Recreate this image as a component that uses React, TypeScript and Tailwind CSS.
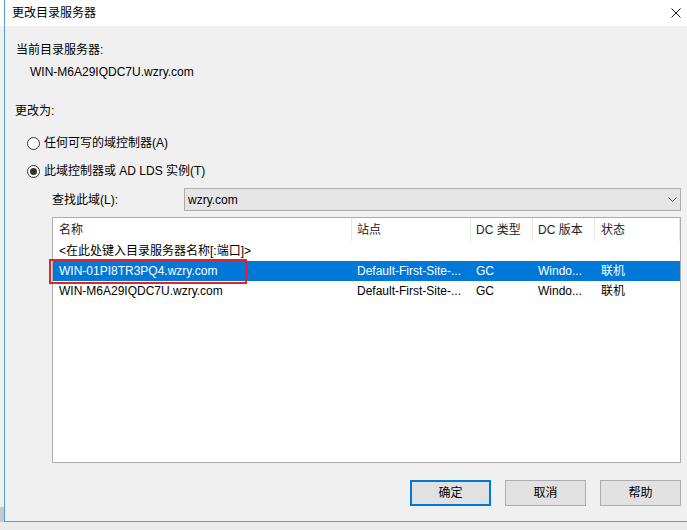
import * as React from "react";

const cols = [
  { key: "name", label: "名称", cls: "w-[299px] pl-[6px]" },
  { key: "site", label: "站点", cls: "w-[119px] pl-[5px]" },
  { key: "type", label: "DC 类型", cls: "w-[62px] pl-[5px]" },
  { key: "ver", label: "DC 版本", cls: "w-[62px] pl-[5px]" },
  { key: "state", label: "状态", cls: "flex-1 pl-[6px]" },
];

const servers = [
  { name: "WIN-01PI8TR3PQ4.wzry.com", site: "Default-First-Site-...", type: "GC", ver: "Windo...", state: "联机", selected: true },
  { name: "WIN-M6A29IQDC7U.wzry.com", site: "Default-First-Site-...", type: "GC", ver: "Windo...", state: "联机", selected: false },
];

function Radio({ checked, label }: { checked?: boolean; label: string }) {
  return (
    <div className="flex items-center h-[16px] ml-[22px] gap-[4px]">
      <span className="w-[13px] h-[13px] rounded-full border border-[#333] bg-white flex items-center justify-center">
        {checked && <span className="w-[7px] h-[7px] rounded-full bg-[#333]" />}
      </span>
      <span className="leading-[16px]">{label}</span>
    </div>
  );
}

function Button({ label, isDefault }: { label: string; isDefault?: boolean }) {
  return (
    <div
      className={
        isDefault
          ? "w-[81px] h-[26px] flex items-center justify-center bg-[#e1e1e1] border-2 border-[#0078d7]"
          : "w-[81px] h-[26px] flex items-center justify-center bg-[#e1e1e1] border border-[#adadad]"
      }
    >
      {label}
    </div>
  );
}

export default function App() {
  return (
    <div className="w-[687px] h-[530px] overflow-hidden flex bg-[#ebebeb] text-[12px] text-black font-['Liberation_Sans','Noto_Sans_CJK_SC',sans-serif]">
      {/* window behind the dialog */}
      <div className="w-[4px] shrink-0 flex flex-col">
        <div className="h-[26px] bg-white" />
        <div className="h-[481px] bg-[#f0f0f0]" />
        <div className="h-[15px] bg-[#c8c8c8]" />
      </div>

      <div className="w-[683px] shrink-0 h-[522px] border-l border-b border-[#4d9de0] bg-[#f0f0f0] flex flex-col">
        <div className="h-[26px] bg-white flex items-center pl-[7px] pr-[6px]">
          <span className="leading-[16px]">更改目录服务器</span>
          <svg className="ml-auto" width="10" height="10" viewBox="0 0 10 10">
            <path d="M0.5 0.5 L9.5 9.5 M9.5 0.5 L0.5 9.5" stroke="#111" strokeWidth="1" />
          </svg>
        </div>

        <div className="flex flex-col">
          <div className="mt-[16px] ml-[11px] leading-[16px]">当前目录服务器:</div>
          <div className="mt-[6px] ml-[25px] leading-[16px]">WIN-M6A29IQDC7U.wzry.com</div>
          <div className="mt-[23px] ml-[10px] leading-[16px]">更改为:</div>
          <div className="mt-[16px]">
            <Radio label="任何可写的域控制器(A)" />
          </div>
          <div className="mt-[12px]">
            <Radio checked label="此域控制器或 AD LDS 实例(T)" />
          </div>

          <div className="mt-[9px] ml-[47px] flex items-center h-[23px]">
            <span className="w-[132px] leading-[16px]">查找此域(L):</span>
            <div className="w-[497px] h-[23px] bg-[#e5e5e5] border border-[#acacac] flex items-center pl-[3px] pr-[3px]">
              <span className="leading-[16px]">wzry.com</span>
              <svg className="ml-auto" width="9" height="5" viewBox="0 0 9 5">
                <path d="M0.5 0.5 L4.5 4.5 L8.5 0.5" stroke="#555" strokeWidth="1" fill="none" />
              </svg>
            </div>
          </div>

          <div className="mt-[6px] ml-[47px] w-[629px] h-[246px] bg-white border border-[#adadad] flex flex-col">
            <div className="h-[23px] flex">
              {cols.map((c) => (
                <div key={c.key} className={`${c.cls} h-[23px] flex items-center border-r border-[#e5e5e5] text-[#222]`}>
                  {c.label}
                </div>
              ))}
            </div>
            <div className="h-[20px] flex items-center pl-[6px]">&lt;在此处键入目录服务器名称[:端口]&gt;</div>
            {servers.map((s) => (
              <div
                key={s.name}
                className={
                  s.selected
                    ? "relative h-[20px] flex items-center bg-[#0078d7] text-white"
                    : "relative h-[20px] flex items-center"
                }
              >
                <div className={cols[0].cls}>{s.name}</div>
                <div className={cols[1].cls}>{s.site}</div>
                <div className={cols[2].cls}>{s.type}</div>
                <div className={cols[3].cls}>{s.ver}</div>
                <div className={cols[4].cls}>{s.state}</div>
                {s.selected && (
                  <div className="absolute left-[-4px] top-[-2px] w-[198px] h-[25px] border-2 border-[#e8202a]" />
                )}
              </div>
            ))}
          </div>

          <div className="mt-[17px] ml-[405px] flex gap-[14px]">
            <Button label="确定" isDefault />
            <Button label="取消" />
            <Button label="帮助" />
          </div>
        </div>
      </div>
    </div>
  );
}
